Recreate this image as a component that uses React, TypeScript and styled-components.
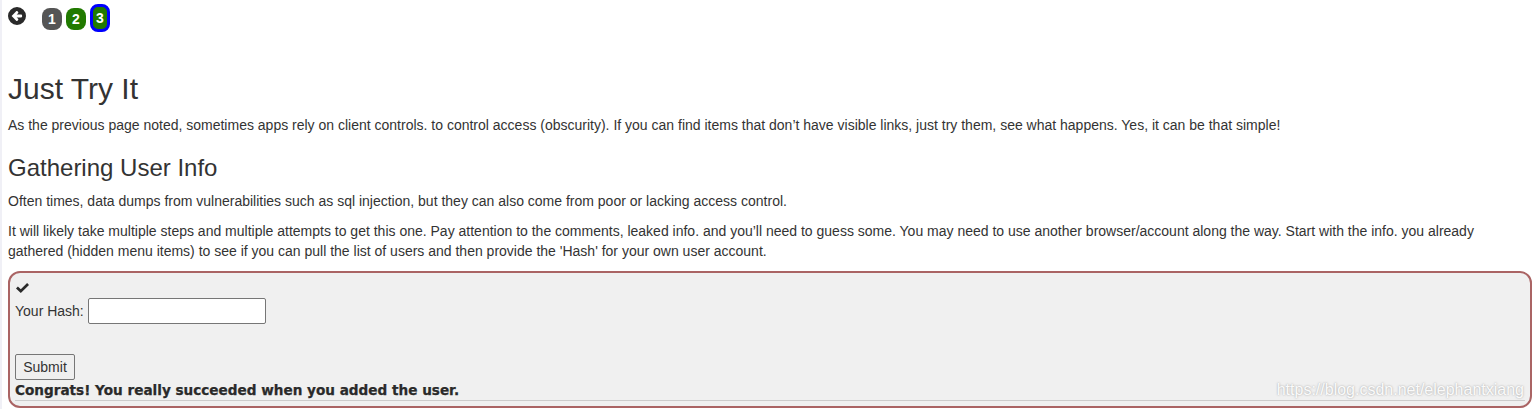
import React from 'react';
import styled, { createGlobalStyle } from 'styled-components';

const GlobalStyle = createGlobalStyle`
  html, body {
    margin: 0;
    padding: 0;
    background: #fff;
  }
  body {
    font-family: "Liberation Sans", Arial, sans-serif;
    font-size: 14px;
    line-height: 20px;
    color: #333;
  }
`;

const Page = styled.div`
  position: relative;
  height: 409px;
  overflow: hidden;
  box-sizing: border-box;
  padding-left: 8px;
  border-left: 2px solid #f0f0f6;
`;

const Content = styled.div`
  margin-left: -2px;
`;

const PageNav = styled.div`
  display: flex;
  align-items: flex-start;
  height: 72px;
  padding-top: 4px;
  box-sizing: border-box;
`;

const BackLink = styled.a`
  display: block;
  width: 18px;
  height: 18px;
  margin-top: 3px;
  margin-right: 16px;
  color: #2a2a2a;
`;

const Badges = styled.div`
  display: flex;
  gap: 4px;
`;

const Badge = styled.div<{ $done?: boolean; $current?: boolean }>`
  box-sizing: border-box;
  width: 20px;
  height: ${(p) => (p.$current ? '28px' : '22px')};
  margin-top: ${(p) => (p.$current ? '0' : '4px')};
  border-radius: 8px;
  border: ${(p) => (p.$current ? '3px solid #0000ff' : 'none')};
  background: ${(p) => (p.$done ? '#217a00' : '#555')};
  color: #fff;
  font-weight: bold;
  font-size: 14px;
  line-height: 23px;
  text-align: center;
`;

const Title = styled.h1`
  margin: 0 0 10px;
  font-size: 30px;
  font-weight: 500;
  line-height: 33px;
`;

const Heading = styled.h2`
  margin: 20px 0 10px;
  font-size: 24px;
  font-weight: 500;
  line-height: 26px;
`;

const Text = styled.p`
  margin: 0 0 10px;
  padding-right: 40px;
`;

const AttackPanel = styled.div`
  box-sizing: border-box;
  height: 137px;
  padding: 10px 5px 0;
  border: 2px solid #aa6464;
  border-radius: 12px;
  background: #f0f0f0;
`;

const CheckRow = styled.div`
  box-sizing: border-box;
  height: 15px;
  padding: 0 0 0 1px;
  color: #2a2a2a;

  svg {
    display: block;
  }
`;

const FieldRow = styled.form`
  display: flex;
  align-items: center;
  gap: 4px;
  height: 26px;
`;

const HashInput = styled.input`
  box-sizing: border-box;
  width: 178px;
  height: 26px;
  padding: 0 4px;
  border: 1px solid #767676;
  border-radius: 2px;
  background: #fff;
`;

const SubmitButton = styled.button`
  display: block;
  box-sizing: border-box;
  width: 60px;
  height: 26px;
  margin-top: 30px;
  padding: 0;
  border: 1px solid #767676;
  border-radius: 2px;
  background: #efefef;
  color: #333;
  font-family: "Liberation Sans", Arial, sans-serif;
  font-size: 14px;
`;

const Feedback = styled.div`
  height: 20px;
  border-bottom: 1px solid #ccc;
  font-family: "DejaVu Sans", Verdana, sans-serif;
  font-size: 13.6px;
  font-weight: bold;
  line-height: 21px;
  color: #2a2a2a;
  -webkit-text-stroke: 0.25px #2a2a2a;
`;

const Watermark = styled.div`
  position: absolute;
  right: 8px;
  bottom: 9px;
  font-size: 16px;
  line-height: 20px;
  color: rgba(255, 255, 255, 0.95);
  text-shadow: 0 0 2px rgba(120, 120, 120, 0.7);
`;

// circle with a cut-out left arrow, the stock icon set has a thinner one
const BackIcon = () => (
  <svg width="18" height="18" viewBox="0 0 18 18">
    <path
      fillRule="evenodd"
      fill="currentColor"
      d="M9 0a9 9 0 1 1 0 18A9 9 0 0 1 9 0ZM3.6 9l4.6 4.7c.4.4.9.4 1.3 0l.6-.6c.4-.4.4-.9 0-1.3L8.6 10.4h4.6c.5 0 .9-.4.9-.9V8.5c0-.5-.4-.9-.9-.9H8.6l1.5-1.4c.4-.4.4-.9 0-1.3l-.6-.6c-.4-.4-.9-.4-1.3 0L3.6 9Z"
    />
  </svg>
);

const CheckIcon = () => (
  <svg width="13" height="10" viewBox="0 0 13 10">
    <path fill="currentColor" d="M0 5.4 1.9 3.5 4.8 6.3 11.1 0 13 1.9 4.8 10Z" />
  </svg>
);

const App: React.FC = () => {
  return (
    <Page>
      <GlobalStyle />
      <Content>
        <PageNav>
          <BackLink>
            <BackIcon />
          </BackLink>
          <Badges>
            <Badge>1</Badge>
            <Badge $done>2</Badge>
            <Badge $done $current>3</Badge>
          </Badges>
        </PageNav>

        <Title>Just Try It</Title>
        <Text>
          As the previous page noted, sometimes apps rely on client controls. to control access (obscurity). If you can find items that don’t have visible links, just try them, see what happens. Yes, it can be that simple!
        </Text>

        <Heading>Gathering User Info</Heading>
        <Text>
          Often times, data dumps from vulnerabilities such as sql injection, but they can also come from poor or lacking access control.
        </Text>
        <Text>
          It will likely take multiple steps and multiple attempts to get this one. Pay attention to the comments, leaked info. and you’ll need to guess some. You may need to use another browser/account along the way. Start with the info. you already gathered (hidden menu items) to see if you can pull the list of users and then provide the 'Hash' for your own user account.
        </Text>

        <AttackPanel>
          <CheckRow>
            <CheckIcon />
          </CheckRow>
          <FieldRow>
            Your Hash:
            <HashInput type="text" />
          </FieldRow>
          <SubmitButton type="button">Submit</SubmitButton>
          <Feedback>Congrats! You really succeeded when you added the user.</Feedback>
        </AttackPanel>
      </Content>
      <Watermark>https://blog.csdn.net/elephantxiang</Watermark>
    </Page>
  );
};

export default App;
